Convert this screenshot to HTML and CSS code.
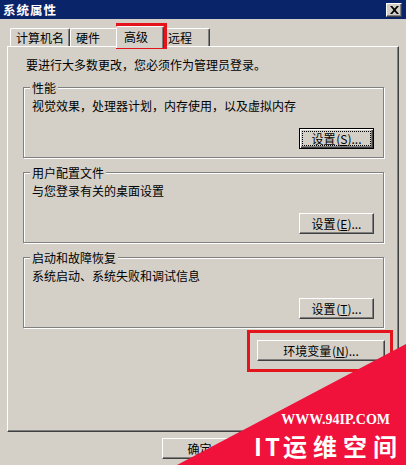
FILE: index.html
```html
<!DOCTYPE html>
<html lang="zh-CN">
<head>
    <meta charset="UTF-8">
    <meta name="viewport" content="width=device-width, initial-scale=1.0">
    <title>系统属性</title>
    <link rel="stylesheet" href="styles.css">
</head>
<body>
    <div class="window">
        <div class="titlebar">
            <div class="title">系统属性</div>
            <button class="close">
                <svg width="9" height="8" viewBox="0 0 9 8"><path d="M0 0h2.2l2.3 2.6L6.8 0H9L5.6 4 9 8H6.8L4.5 5.4 2.2 8H0l3.4-4z" fill="#000"/></svg>
            </button>
        </div>
        <div class="content">
            <div class="tabs">
                <div class="tab tab-first">计算机名</div>
                <div class="tab">硬件</div>
                <div class="tab tab-active">高级</div>
                <div class="tab">远程</div>
            </div>
            <div class="panel">
                <div class="note">要进行大多数更改，您必须作为管理员登录。</div>
                <div class="group">
                    <div class="group-title">性能</div>
                    <div class="group-text">视觉效果，处理器计划，内存使用，以及虚拟内存</div>
                    <div class="group-actions">
                        <button class="btn btn-default"><span>设置 (<u>S</u>)...</span></button>
                    </div>
                </div>
                <div class="group">
                    <div class="group-title">用户配置文件</div>
                    <div class="group-text">与您登录有关的桌面设置</div>
                    <div class="group-actions">
                        <button class="btn">设置 (<u>E</u>)...</button>
                    </div>
                </div>
                <div class="group">
                    <div class="group-title">启动和故障恢复</div>
                    <div class="group-text">系统启动、系统失败和调试信息</div>
                    <div class="group-actions">
                        <button class="btn">设置 (<u>T</u>)...</button>
                    </div>
                </div>
                <div class="panel-actions">
                    <button class="btn btn-env">环境变量 (<u>N</u>)...</button>
                </div>
            </div>
            <div class="dialog-actions">
                <button class="btn">确定</button>
                <button class="btn">取消</button>
                <button class="btn">应用(<u>A</u>)</button>
            </div>
        </div>

        <!-- red annotation boxes drawn over the screenshot -->
        <div class="mark mark-tab"></div>
        <div class="mark mark-env"></div>

        <div class="watermark">
            <div class="wm-url">WWW.94IP.COM</div>
            <div class="wm-name"><span class="wm-latin">IT</span>运维空间</div>
        </div>
    </div>
</body>
</html>
```

FILE: styles.css
```css
body {
    margin: 0;
    font-family: "Noto Sans CJK SC", "DejaVu Sans", sans-serif;
    font-size: 12px;
    color: #000;
}
.window {
    position: relative;
    width: 406px;
    height: 465px;
    overflow: hidden;
    background: #d4d0c8;
}
.titlebar {
    display: flex;
    align-items: center;
    justify-content: space-between;
    height: 19px;
    padding: 0 4px 0 3px;
    background: #0a246a;
}
.title {
    color: #fff;
    font-weight: bold;
    font-size: 12.5px;
    letter-spacing: 1px;
    line-height: 19px;
}
.close {
    display: flex;
    align-items: center;
    justify-content: center;
    width: 16px;
    height: 14px;
    padding: 0;
    background: #d4d0c8;
    border: 1px solid;
    border-color: #fff #404040 #404040 #fff;
    box-shadow: inset -1px -1px #808080;
}
.content {
    padding: 0 7px;
}
.tabs {
    display: flex;
    align-items: flex-end;
    height: 24px;
    margin-top: 3px;
    padding-left: 3px;
}
.tab {
    box-sizing: border-box;
    min-width: 48px;
    height: 18px;
    padding: 0 5px;
    line-height: 17px;
    border: 1px solid;
    border-bottom: none;
    border-color: #fff #404040 #404040 #fff;
    border-radius: 2px 2px 0 0;
    box-shadow: inset -1px 0 #808080;
}
.tab-active {
    position: relative;
    z-index: 1;
    height: 22px;
    margin: 0 -2px -2px;
    padding: 0 7px;
    line-height: 20px;
    background: #d4d0c8;
}
.panel {
    box-sizing: border-box;
    height: 386px;
    padding: 10px 13px 0 15px;
    border: 1px solid;
    border-color: #fff #404040 #404040 #fff;
    box-shadow: inset -1px -1px #808080;
}
.note {
    margin-left: 3px;
    line-height: 16px;
}
.group {
    display: flex;
    flex-direction: column;
    align-items: flex-start;
    margin: 14px 1px 0 0;
    padding: 0 9px 8px 8px;
    border: 1px solid #808080;
    box-shadow: 1px 1px 0 #fff, inset 1px 1px 0 #fff;
}
.group + .group {
    margin-top: 14px;
}
.group-title {
    margin: -7px 0 0 -2px;
    padding: 0 2px;
    line-height: 14px;
    background: #d4d0c8;
}
.group-text {
    margin-top: 3px;
    line-height: 16px;
}
.group-actions {
    display: flex;
    justify-content: flex-end;
    align-self: stretch;
    margin-top: 14px;
}
.btn {
    box-sizing: border-box;
    width: 75px;
    height: 21px;
    padding: 0;
    font-family: inherit;
    font-size: 12px;
    line-height: 18px;
    word-spacing: -2px;
    color: #000;
    background: #d4d0c8;
    border: 1px solid;
    border-color: #fff #404040 #404040 #fff;
    box-shadow: inset -1px -1px #808080;
}
.btn u {
    text-decoration-thickness: 1px;
}
.btn-default {
    border-color: #000;
    box-shadow: inset 1px 1px #fff, inset -1px -1px #404040, inset -2px -2px #808080;
}
.btn-default span {
    display: block;
    margin: 0 3px;
    line-height: 13px;
    outline: 1px dotted #000;
}
.panel-actions {
    display: flex;
    justify-content: flex-end;
    margin-top: 12px;
}
.btn-env {
    width: 128px;
}
.dialog-actions {
    display: flex;
    justify-content: flex-end;
    gap: 6px;
    margin-top: 6px;
}
.mark {
    position: absolute;
    border: 3px solid #e3141b;
}
.mark-tab {
    left: 116px;
    top: 23px;
    width: 45px;
    height: 20px;
}
.mark-env {
    left: 247px;
    top: 330px;
    width: 140px;
    height: 36px;
}
.watermark {
    position: absolute;
    left: 0;
    top: 0;
    width: 406px;
    height: 465px;
    display: flex;
    flex-direction: column;
    align-items: flex-end;
    justify-content: flex-end;
    padding: 0 3px 5px 0;
    box-sizing: border-box;
    background: #f0123a;
    clip-path: polygon(177px 465px, 406px 344px, 406px 465px);
    color: #fff;
}
.wm-url {
    margin-right: 13px;
    font-family: "Liberation Serif", serif;
    font-weight: bold;
    font-size: 14px;
    line-height: 14px;
}
.wm-name {
    margin-top: 5px;
    font-weight: bold;
    font-size: 24px;
    letter-spacing: 6px;
    line-height: 28px;
}
.wm-latin {
    letter-spacing: 3px;
}
```
